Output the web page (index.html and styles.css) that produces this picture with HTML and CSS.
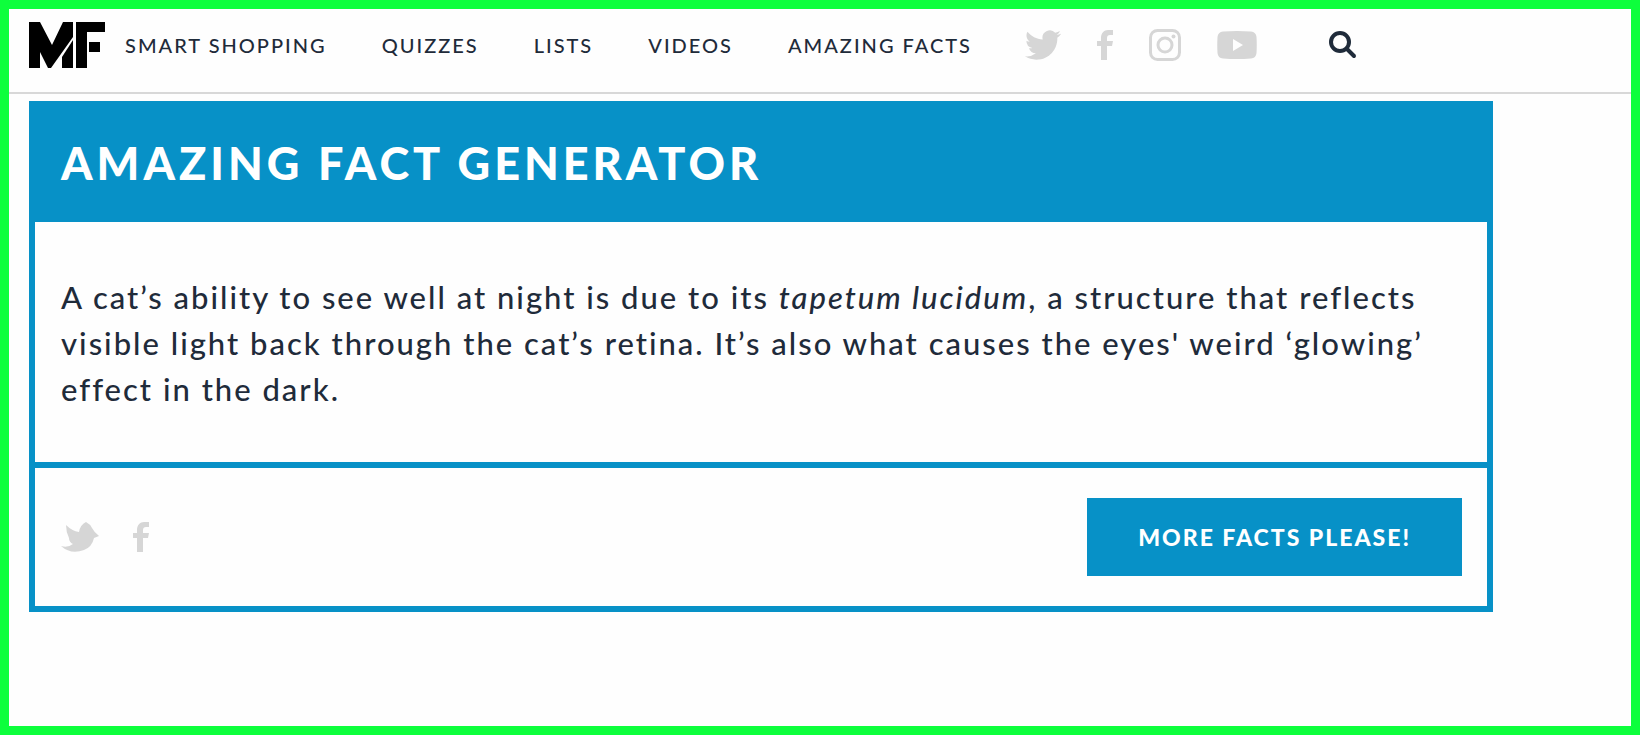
FILE: index.html
```html
<!DOCTYPE html>
<html lang="en">
<head>
    <meta charset="UTF-8">
    <meta name="viewport" content="width=device-width, initial-scale=1.0">
    <title>Amazing Fact Generator</title>
    <link rel="stylesheet" href="styles.css">
</head>
<body>

<!-- Site Header -->
<header class="site-header">
    <a class="logo" href="#" aria-label="Home">
        <svg viewBox="0 0 76 46" width="76" height="46">
            <path d="M0 0H11L23 23L34 0H44V15L22 46H19L11 30V46H0Z"/>
            <path d="M44 18V46H33V35Z"/>
            <path d="M47 0H76V10H58V46H47Z"/>
            <path d="M60 20H71V30H60Z"/>
        </svg>
    </a>
    <nav class="main-nav">
        <a href="#">SMART SHOPPING</a>
        <a href="#">QUIZZES</a>
        <a href="#">LISTS</a>
        <a href="#">VIDEOS</a>
        <a href="#">AMAZING FACTS</a>
    </nav>
    <div class="social">
        <a href="#" aria-label="Twitter">
            <svg viewBox="0 2 24 20" width="36" height="30">
                <path d="M23.953 4.57a10 10 0 01-2.825.775 4.958 4.958 0 002.163-2.723c-.951.555-2.005.959-3.127 1.184a4.92 4.92 0 00-8.384 4.482C7.69 8.095 4.067 6.13 1.64 3.162a4.822 4.822 0 00-.666 2.475c0 1.71.87 3.213 2.188 4.096a4.904 4.904 0 01-2.228-.616v.06a4.923 4.923 0 003.946 4.827 4.996 4.996 0 01-2.212.085 4.936 4.936 0 004.604 3.417 9.867 9.867 0 01-6.102 2.105c-.39 0-.779-.023-1.17-.067a13.995 13.995 0 007.557 2.209c9.053 0 13.998-7.496 13.998-13.985 0-.21 0-.42-.015-.63A9.935 9.935 0 0024 4.59z"/>
            </svg>
        </a>
        <a href="#" aria-label="Facebook">
            <svg viewBox="0 0 16 30" width="16" height="30">
                <path d="M4 30V16H0V11H4V8C4 3 7 0 11 0H16V5H13C11 5 10 6 10 8V11H16L15 16H10V30Z"/>
            </svg>
        </a>
        <a href="#" aria-label="Instagram">
            <svg class="outline" viewBox="0 0 32 32" width="32" height="32">
                <rect x="1.5" y="1.5" width="29" height="29" rx="7"/>
                <circle cx="16" cy="16" r="7"/>
                <circle class="dot" cx="24.500" cy="7.500" r="2"/>
            </svg>
        </a>
        <a href="#" aria-label="YouTube">
            <svg viewBox="0 0 40 28" width="40" height="28">
                <path fill-rule="evenodd" d="M6 .5Q20-.5 34 .5Q39 1 39.500 6Q40 14 39.500 22Q39 27 34 27.500Q20 28.500 6 27.500Q1 27 .5 22Q0 14 .5 6Q1 1 6 .5ZM16 8V20L26 14Z"/>
            </svg>
        </a>
    </div>
    <button class="search-btn" aria-label="Search">
        <svg viewBox="0 0 28 28" width="28" height="28">
            <circle cx="11" cy="11" r="9"/>
            <path d="M18 18L25 25"/>
        </svg>
    </button>
</header>

<!-- Fact Generator -->
<main class="content">
    <section class="fact-card">
        <h1 class="fact-title">AMAZING FACT GENERATOR</h1>
        <p class="fact-text">A cat’s ability to see well at night is due to its <em>tapetum lucidum</em>, a structure that reflects visible light back through the cat’s retina. It’s also what causes the eyes' weird ‘glowing’ effect in the dark.</p>
        <div class="fact-footer">
            <div class="share">
                <a href="#" aria-label="Share on Twitter">
                    <svg viewBox="0 0 38 30" width="38" height="30">
                        <path d="M0 24Q7 26 12 22Q8 20 8 16Q5 10 5 3Q11 9 18 10Q19 3 25 0Q29 2 31 6Q33 10 38 14L33 16Q31 25 23 28Q10 33 0 24Z"/>
                    </svg>
                </a>
                <a href="#" aria-label="Share on Facebook">
                    <svg viewBox="0 0 16 30" width="16" height="30">
                        <path d="M4 30V16H0V11H4V8C4 3 7 0 11 0H16V5H13C11 5 10 6 10 8V11H16L15 16H10V30Z"/>
                    </svg>
                </a>
            </div>
            <button class="more-btn">MORE FACTS PLEASE!</button>
        </div>
    </section>
</main>

</body>
</html>
```
FILE: styles.css
```css
* {
    box-sizing: border-box;
}
body {
    margin: 0;
    min-height: 100vh;
    border: 9px solid #0dff3c;
    background-color: #fefefe;
    color: #1f2b3a;
    font-family: Lato, sans-serif;
}
svg {
    display: block;
}
.site-header {
    display: flex;
    align-items: center;
    padding: 13px 20px 24px;
    border-bottom: 2px solid #d8d8d8;
}
.logo {
    margin-right: 20px;
}
.main-nav {
    display: flex;
    gap: 55px;
    font-size: 20px;
    font-weight: 500;
    line-height: 26px;
    letter-spacing: 2px;
    white-space: nowrap;
}
.main-nav a {
    color: inherit;
    text-decoration: none;
}
.social {
    display: flex;
    align-items: center;
    gap: 36px;
    margin-left: 53px;
}
.social svg,
.share svg {
    fill: #d6d6d6;
}
.social .outline {
    fill: none;
    stroke: #d6d6d6;
    stroke-width: 3;
}
.social .outline .dot {
    fill: #d6d6d6;
    stroke: none;
}
.search-btn {
    margin-left: 72px;
    padding: 0;
    border: none;
    background: none;
    cursor: pointer;
}
.search-btn svg {
    fill: none;
    stroke: #1f2b3a;
    stroke-width: 4;
    stroke-linecap: round;
}
.content {
    padding: 7px 138px 20px 20px;
}
.fact-card {
    border: 6px solid #0791c7;
}
.fact-title {
    margin: 0;
    padding: 28px 26px 31px;
    background-color: #0791c7;
    color: #fff;
    font-size: 45px;
    font-weight: 900;
    line-height: 56px;
    letter-spacing: 4px;
}
.fact-text {
    margin: 0;
    padding: 52px 26px 50px;
    border-bottom: 6px solid #0791c7;
    font-size: 31px;
    font-weight: 500;
    line-height: 46px;
    letter-spacing: 2px;
}
.fact-footer {
    display: flex;
    align-items: center;
    justify-content: space-between;
    padding: 30px 25px 30px 26px;
}
.share {
    display: flex;
    gap: 34px;
}
.more-btn {
    padding: 25px 51px;
    border: none;
    background-color: #0791c7;
    color: #fff;
    font-family: inherit;
    font-size: 23px;
    font-weight: 900;
    line-height: 28px;
    letter-spacing: 2px;
    cursor: pointer;
}
```
